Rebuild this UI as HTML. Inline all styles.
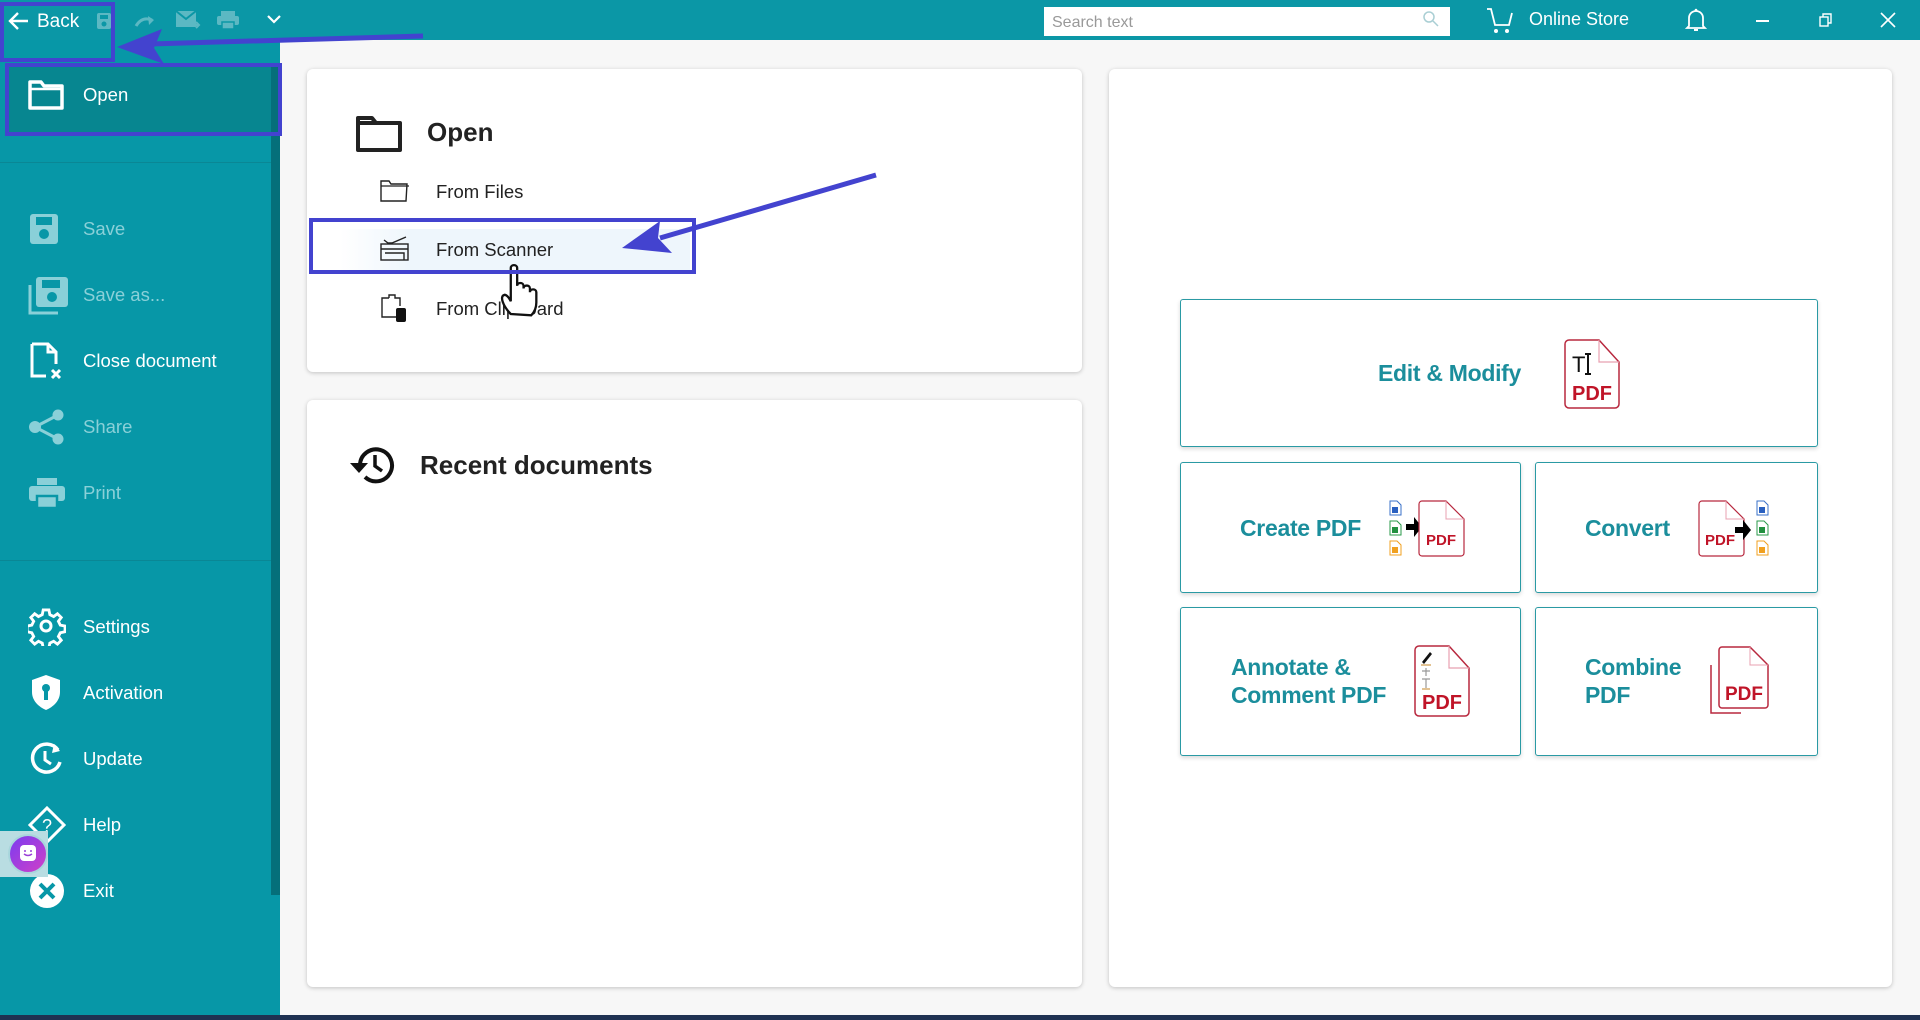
<!DOCTYPE html>
<html><head><meta charset="utf-8"><style>
*{margin:0;padding:0;box-sizing:border-box}
body{width:1920px;height:1020px;overflow:hidden;background:#f7f7f7;font-family:"Liberation Sans",sans-serif;position:relative}
.abs{position:absolute}
#top{left:0;top:0;width:1920px;height:40px;background:#0b97a6}
#side{left:0;top:40px;width:280px;height:975px;background:#0797a7}
#bottom{left:0;top:1015px;width:1920px;height:5px;background:#1f3252}
.card{position:absolute;background:#fff;border-radius:6px;box-shadow:0 1px 4px rgba(0,0,0,.22)}
.sitem{position:absolute;left:83px;font-size:18.5px;color:#fff;transform:translateY(-50%)}
.dim{color:#8ad0d8}
.sicon{position:absolute;left:28px;transform:translateY(-50%)}
.tile{position:absolute;background:#fff;border:1.5px solid #2a9aa4;border-radius:3px;box-shadow:0 2px 4px rgba(0,0,0,.15)}
.tt{position:absolute;color:#1b8e9c;font-size:23px;font-weight:bold;line-height:28px;letter-spacing:-0.3px}
.oi{position:absolute;left:436px;font-size:18.5px;color:#222;transform:translateY(-50%)}
.blue{position:absolute;border:4px solid #4343cf}
</style></head><body>
<div id="top" class="abs"></div>
<div id="side" class="abs"></div>
<div id="bottom" class="abs"></div>

<!-- top bar -->
<svg class="abs" style="left:8px;top:11px" width="22" height="20" viewBox="0 0 22 20"><path d="M20 10H3M10 2L2 10l8 8" stroke="#fff" stroke-width="2.4" fill="none"/></svg>
<div class="abs" style="left:37px;top:11px;font-size:19px;color:#fff">Back</div>
<svg class="abs" style="left:96px;top:12px" width="16" height="18"><rect x="1" y="1" width="14" height="16" rx="2" fill="#5cb8c3"/><rect x="4" y="3" width="8" height="4" fill="#0b97a6"/><circle cx="8" cy="12" r="2.5" fill="#0b97a6"/></svg>
<svg class="abs" style="left:134px;top:14px" width="22" height="14"><path d="M2 12Q8 2 18 6" stroke="#5cb8c3" stroke-width="3" fill="none"/><path d="M14 2l6 4-5 5z" fill="#5cb8c3"/></svg>
<svg class="abs" style="left:175px;top:9px" width="26" height="22"><rect x="1" y="2" width="20" height="16" fill="#5cb8c3"/><path d="M1 2l10 8 10-8" stroke="#0b97a6" stroke-width="2" fill="none"/><path d="M16 16h8M21 13l3 3-3 3" stroke="#5cb8c3" stroke-width="2" fill="none"/></svg>
<svg class="abs" style="left:216px;top:10px" width="24" height="20"><rect x="5" y="1" width="14" height="5" fill="#5cb8c3"/><rect x="1" y="6" width="22" height="9" rx="2" fill="#5cb8c3"/><rect x="6" y="12" width="12" height="7" fill="#5cb8c3" stroke="#0b97a6" stroke-width="1.5"/></svg>
<svg class="abs" style="left:266px;top:14px" width="16" height="10"><path d="M2 2l6 6 6-6" stroke="#fff" stroke-width="2.2" fill="none"/></svg>

<div class="abs" style="left:1044px;top:7px;width:406px;height:29px;background:#fff"></div>
<div class="abs" style="left:1052px;top:14px;font-size:16px;color:#999">Search text</div>
<svg class="abs" style="left:1422px;top:10px" width="18" height="18"><circle cx="7" cy="7" r="5" stroke="#aacfd4" stroke-width="1.5" fill="none"/><path d="M11 11l5 5" stroke="#aacfd4" stroke-width="1.5"/></svg>
<svg class="abs" style="left:1486px;top:7px" width="28" height="28"><path d="M1 2h4l4 16h14l3-12" stroke="#fff" stroke-width="1.8" fill="none"/><circle cx="10" cy="24" r="2" fill="#fff"/><circle cx="21" cy="24" r="2" fill="#fff"/></svg>
<div class="abs" style="left:1529px;top:9px;font-size:18px;color:#fff">Online Store</div>
<svg class="abs" style="left:1685px;top:7px" width="22" height="26"><path d="M4 19V11a7 7 0 0 1 14 0v8l2 2H2z" stroke="#fff" stroke-width="1.8" fill="none"/><path d="M9 23h4" stroke="#fff" stroke-width="2"/><circle cx="11" cy="3" r="1.3" fill="#fff"/></svg>
<div class="abs" style="left:1756px;top:20px;width:13px;height:1.5px;background:#fff"></div>
<svg class="abs" style="left:1819px;top:13px" width="14" height="14"><rect x="1" y="4" width="8" height="9" stroke="#fff" stroke-width="1.4" fill="none"/><path d="M4 4V1h8v9H9" stroke="#fff" stroke-width="1.4" fill="none"/></svg>
<svg class="abs" style="left:1880px;top:12px" width="16" height="16"><path d="M1 1l14 14M15 1L1 15" stroke="#fff" stroke-width="1.6"/></svg>

<!-- sidebar -->
<div class="abs" style="left:6px;top:64px;width:266px;height:71px;background:#078690"></div>
<div class="abs" style="left:271px;top:65px;width:9px;height:830px;background:#056f7a"></div>
<div class="abs" style="left:0;top:162px;width:271px;height:1px;background:#0a8795"></div>
<div class="abs" style="left:0;top:560px;width:271px;height:1px;background:#0a8795"></div>
<svg class="abs" style="left:28px;top:80px" width="36" height="30"><path d="M2 2h11l3 4h18v22H2z" stroke="#fff" stroke-width="3.5" fill="none" stroke-linejoin="round"/><path d="M2 9h32" stroke="#fff" stroke-width="2.5"/></svg>
<div class="sitem" style="top:95px">Open</div>

<svg class="sicon" style="top:229px" width="36" height="34"><rect x="2" y="2" width="28" height="30" rx="3" fill="#8ad0d8"/><rect x="8" y="5" width="16" height="8" fill="#0797a7"/><circle cx="16" cy="22" r="5" fill="#0797a7"/></svg>
<div class="sitem dim" style="top:229px">Save</div>
<svg class="sicon" style="top:295px" width="42" height="40"><path d="M2 10v28h28" stroke="#8ad0d8" stroke-width="3" fill="none"/><rect x="8" y="2" width="32" height="30" rx="3" fill="#8ad0d8"/><rect x="14" y="5" width="18" height="8" fill="#0797a7"/><circle cx="24" cy="22" r="5" fill="#0797a7"/></svg>
<div class="sitem dim" style="top:295px">Save as...</div>
<svg class="sicon" style="top:361px" width="40" height="38"><path d="M4 2h16l8 8v12M20 2v8h8M4 2v32h14" stroke="#fff" stroke-width="3" fill="none"/><path d="M24 28l8 8M32 28l-8 8" stroke="#fff" stroke-width="3"/></svg>
<div class="sitem" style="top:361px">Close document</div>
<svg class="sicon" style="top:427px" width="38" height="36"><circle cx="7" cy="18" r="6" fill="#8ad0d8"/><circle cx="30" cy="6" r="5.5" fill="#8ad0d8"/><circle cx="30" cy="30" r="5.5" fill="#8ad0d8"/><path d="M7 18L30 6M7 18l23 12" stroke="#8ad0d8" stroke-width="3"/></svg>
<div class="sitem dim" style="top:427px">Share</div>
<svg class="sicon" style="top:493px" width="38" height="34"><rect x="9" y="2" width="20" height="7" fill="#8ad0d8"/><rect x="1" y="10" width="36" height="15" rx="3" fill="#8ad0d8"/><rect x="9" y="20" width="20" height="12" fill="#8ad0d8" stroke="#0797a7" stroke-width="2.5"/></svg>
<div class="sitem dim" style="top:493px">Print</div>

<svg class="sicon" style="top:627px" width="38" height="38" viewBox="0 0 38 38"><path d="M16 2h6l1 5 4 2 4-3 4 4-3 4 2 4 5 1v6l-5 1-2 4 3 4-4 4-4-3-4 2-1 5h-6l-1-5-4-2-4 3-4-4 3-4-2-4-5-1v-6l5-1 2-4-3-4 4-4 4 3 4-2z" stroke="#fff" stroke-width="3" fill="none" transform="scale(.95)"/><circle cx="18" cy="18" r="5" stroke="#fff" stroke-width="3" fill="none"/></svg>
<div class="sitem" style="top:627px">Settings</div>
<svg class="sicon" style="top:693px" width="36" height="40"><path d="M18 2l14 5v12c0 9-7 15-14 18C11 34 4 28 4 19V7z" fill="#fff"/><circle cx="18" cy="15" r="4" fill="#0797a7"/><rect x="16" y="17" width="4" height="10" fill="#0797a7"/></svg>
<div class="sitem" style="top:693px">Activation</div>
<svg class="sicon" style="top:759px" width="38" height="38"><path d="M30 10A14 14 0 1 0 32 22" stroke="#fff" stroke-width="3.5" fill="none"/><path d="M26 4l6 7-8 2z" fill="#fff"/><path d="M17 11v9l6 4" stroke="#fff" stroke-width="3" fill="none"/></svg>
<div class="sitem" style="top:759px">Update</div>
<svg class="sicon" style="top:825px" width="38" height="38"><path d="M19 2l17 17-17 17L2 19z" stroke="#fff" stroke-width="3" fill="none"/><text x="19" y="26" font-size="18" fill="#fff" text-anchor="middle" font-family="Liberation Sans">?</text></svg>
<div class="sitem" style="top:825px">Help</div>
<svg class="sicon" style="top:891px" width="38" height="38"><circle cx="19" cy="19" r="17" fill="#fff"/><path d="M12 12l14 14M26 12L12 26" stroke="#0797a7" stroke-width="4"/></svg>
<div class="sitem" style="top:891px">Exit</div>
<div class="abs" style="left:0;top:831px;width:48px;height:46px;background:#b9dde2"></div>
<div class="abs" style="left:8px;top:834px;width:40px;height:40px;border-radius:50%;background:linear-gradient(135deg,#7a3cf0,#d040c8);border:2px solid #a8d6dc"></div>
<svg class="abs" style="left:19px;top:844px" width="18" height="18"><rect x="1" y="1" width="16" height="16" rx="4" fill="#fff"/><path d="M5 10q4 3 8 0" stroke="#9a40d8" stroke-width="1.5" fill="none"/><circle cx="6" cy="7" r="1" fill="#9a40d8"/><circle cx="12" cy="7" r="1" fill="#9a40d8"/></svg>

<!-- cards -->
<div class="card" style="left:307px;top:69px;width:775px;height:303px"></div>
<div class="card" style="left:307px;top:400px;width:775px;height:587px"></div>
<div class="card" style="left:1109px;top:69px;width:783px;height:918px"></div>

<svg class="abs" style="left:355px;top:115px" width="48" height="38"><path d="M3 3h14l4 5h24v27H3z" stroke="#222" stroke-width="4" fill="none" stroke-linejoin="round"/><path d="M3 8h18" stroke="#222" stroke-width="4"/></svg>
<div class="abs" style="left:427px;top:117px;font-size:26px;font-weight:bold;color:#222">Open</div>
<div class="abs" style="left:340px;top:229px;width:350px;height:42px;background:linear-gradient(90deg,#fff,#eef6fc 20%,#eef6fc)"></div>
<svg class="abs" style="left:380px;top:179px" width="30" height="24"><path d="M1 2h8l2 3h16l-1 17H1z" stroke="#222" stroke-width="1.4" fill="none"/><path d="M1 7h28" stroke="#222" stroke-width="1.2"/></svg>
<div class="oi" style="top:192px">From Files</div>
<svg class="abs" style="left:380px;top:236px" width="30" height="26"><path d="M4 4l4 3h4l14-6" stroke="#222" stroke-width="1.4" fill="none"/><rect x="1" y="8" width="27" height="16" stroke="#222" stroke-width="1.4" fill="none"/><path d="M1 13h27M5 17h19v7" stroke="#222" stroke-width="1.4" fill="none"/></svg>
<div class="oi" style="top:250px">From Scanner</div>
<svg class="abs" style="left:380px;top:293px" width="30" height="30"><path d="M9 5V2h6v3h5v8M20 24H2V5h7" stroke="#222" stroke-width="1.4" fill="none"/><rect x="16" y="15" width="10" height="14" rx="2" fill="#111"/></svg>
<div class="oi" style="top:309px">From Clipboard</div>
<svg class="abs" style="left:498px;top:262px" width="46" height="58" viewBox="0 0 36 44"><path d="M10 40c-6-6-9-14-5-15 2 0 4 3 5 5V4c0-3 5-3 5 0v14c0-3 5-3 5 0v2c0-3 5-3 5 0v3c0-3 5-3 5 0v8c0 5-2 8-4 10z" fill="#fff" stroke="#111" stroke-width="1.8"/></svg>

<svg class="abs" style="left:346px;top:443px" width="52" height="44"><path d="M14 22a16 16 0 1 1 5 12" stroke="#111" stroke-width="4" fill="none"/><path d="M4 20h18l-9 10z" fill="#111"/><path d="M29 12v11l7 5" stroke="#111" stroke-width="3.5" fill="none"/></svg>
<div class="abs" style="left:420px;top:450px;font-size:26px;font-weight:bold;color:#222">Recent documents</div>

<!-- tiles -->
<div class="tile" style="left:1180px;top:299px;width:638px;height:148px"></div>
<div class="tile" style="left:1180px;top:462px;width:341px;height:131px"></div>
<div class="tile" style="left:1535px;top:462px;width:283px;height:131px"></div>
<div class="tile" style="left:1180px;top:607px;width:341px;height:149px"></div>
<div class="tile" style="left:1535px;top:607px;width:283px;height:149px"></div>
<div class="tt" style="left:1378px;top:359px">Edit &amp; Modify</div>
<div class="tt" style="left:1240px;top:514px">Create PDF</div>
<div class="tt" style="left:1585px;top:514px">Convert</div>
<div class="tt" style="left:1231px;top:653px">Annotate &amp;<br>Comment PDF</div>
<div class="tt" style="left:1585px;top:653px">Combine<br>PDF</div>

<svg class="abs" style="left:1564px;top:338px" width="58" height="72" viewBox="0 0 58 72"><path d="M5 2h30l20 22v42a4 4 0 0 1-4 4H5a4 4 0 0 1-4-4V6a4 4 0 0 1 4-4z" fill="#fff" stroke="#b8283e" stroke-width="1.5"/><path d="M35 2v22h20" stroke="#e8a0b0" stroke-width="1.2" fill="none"/><text x="8" y="34" font-size="22" font-family="Liberation Sans" fill="#111">T</text><path d="M24 16v20M21 16h6M21 36h6" stroke="#111" stroke-width="2"/><text x="28" y="62" font-size="20" font-weight="bold" text-anchor="middle" font-family="Liberation Sans" fill="#c01428">PDF</text></svg>

<svg class="abs" style="left:1388px;top:499px" width="78" height="58" viewBox="0 0 78 58"><g stroke-width="1"><path d="M2 2h7l4 4v10H2z" fill="#fff" stroke="#3a70c8"/><rect x="4" y="8" width="6" height="6" fill="#2a60c0"/><path d="M2 22h7l4 4v10H2z" fill="#fff" stroke="#2a9a4a"/><rect x="4" y="28" width="6" height="6" fill="#229040"/><path d="M2 42h7l4 4v10H2z" fill="#fff" stroke="#f0a020"/><rect x="4" y="48" width="6" height="6" fill="#f0a020"/></g><path d="M18 25h8v-7l8 10-8 10v-7h-8z" fill="#000"/><path d="M34 2h24l18 18v34a3 3 0 0 1-3 3H34a3 3 0 0 1-3-3V5a3 3 0 0 1 3-3z" fill="#fff" stroke="#b8283e" stroke-width="1.2"/><path d="M58 2v18h18" stroke="#e8a0b0" fill="none"/><text x="53" y="46" font-size="15" font-weight="bold" text-anchor="middle" font-family="Liberation Sans" fill="#c01428">PDF</text></svg>

<svg class="abs" style="left:1697px;top:499px" width="75" height="58" viewBox="0 0 75 58"><path d="M5 2h24l18 18v34a3 3 0 0 1-3 3H5a3 3 0 0 1-3-3V5a3 3 0 0 1 3-3z" fill="#fff" stroke="#b8283e" stroke-width="1.2"/><path d="M29 2v18h18" stroke="#e8a0b0" fill="none"/><text x="23" y="46" font-size="15" font-weight="bold" text-anchor="middle" font-family="Liberation Sans" fill="#c01428">PDF</text><path d="M38 28h8v-7l8 10-8 10v-7h-8z" fill="#000"/><g stroke-width="1"><path d="M60 2h7l4 4v10H60z" fill="#fff" stroke="#3a70c8"/><rect x="62" y="8" width="6" height="6" fill="#2a60c0"/><path d="M60 22h7l4 4v10H60z" fill="#fff" stroke="#2a9a4a"/><rect x="62" y="28" width="6" height="6" fill="#229040"/><path d="M60 42h7l4 4v10H60z" fill="#fff" stroke="#f0a020"/><rect x="62" y="48" width="6" height="6" fill="#f0a020"/></g></svg>

<svg class="abs" style="left:1414px;top:644px" width="58" height="74" viewBox="0 0 58 74"><path d="M5 2h30l20 22v44a4 4 0 0 1-4 4H5a4 4 0 0 1-4-4V6a4 4 0 0 1 4-4z" fill="#fff" stroke="#b8283e" stroke-width="1.5"/><path d="M35 2v22h20" stroke="#e8a0b0" stroke-width="1.2" fill="none"/><path d="M8 18l8-10 2 2-8 10z" fill="#111"/><path d="M7 21h10M8 27h8M12 24v8M8 35h8M12 35v9M8 45h8" stroke="#999" stroke-width="1.2"/><path d="M7 21h10M8 45h8" stroke="#e0a040"/><text x="28" y="65" font-size="20" font-weight="bold" text-anchor="middle" font-family="Liberation Sans" fill="#c01428">PDF</text></svg>

<svg class="abs" style="left:1708px;top:645px" width="62" height="70" viewBox="0 0 62 70"><path d="M3 20v48h30" stroke="#b8283e" stroke-width="1.5" fill="none"/><path d="M14 2h28l18 18v40a3 3 0 0 1-3 3H14a3 3 0 0 1-3-3V5a3 3 0 0 1 3-3z" fill="#fff" stroke="#b8283e" stroke-width="1.5"/><path d="M42 2v18h18" stroke="#e8a0b0" fill="none"/><text x="36" y="55" font-size="19" font-weight="bold" text-anchor="middle" font-family="Liberation Sans" fill="#c01428">PDF</text></svg>

<!-- annotations -->
<div class="blue" style="left:0;top:2px;width:115px;height:60px"></div>
<div class="blue" style="left:5px;top:63px;width:277px;height:73px"></div>
<div class="blue" style="left:309px;top:218px;width:387px;height:56px"></div>
<svg class="abs" style="left:0;top:0" width="1920" height="300"><path d="M423 36L150 44" stroke="#4343cf" stroke-width="5"/><path d="M117 47l45-18-8 19 10 16z" fill="#4343cf"/><path d="M876 175L660 238" stroke="#4343cf" stroke-width="5"/><path d="M622 248l38-27-2 17 14 15z" fill="#4343cf"/></svg>
</body></html>
